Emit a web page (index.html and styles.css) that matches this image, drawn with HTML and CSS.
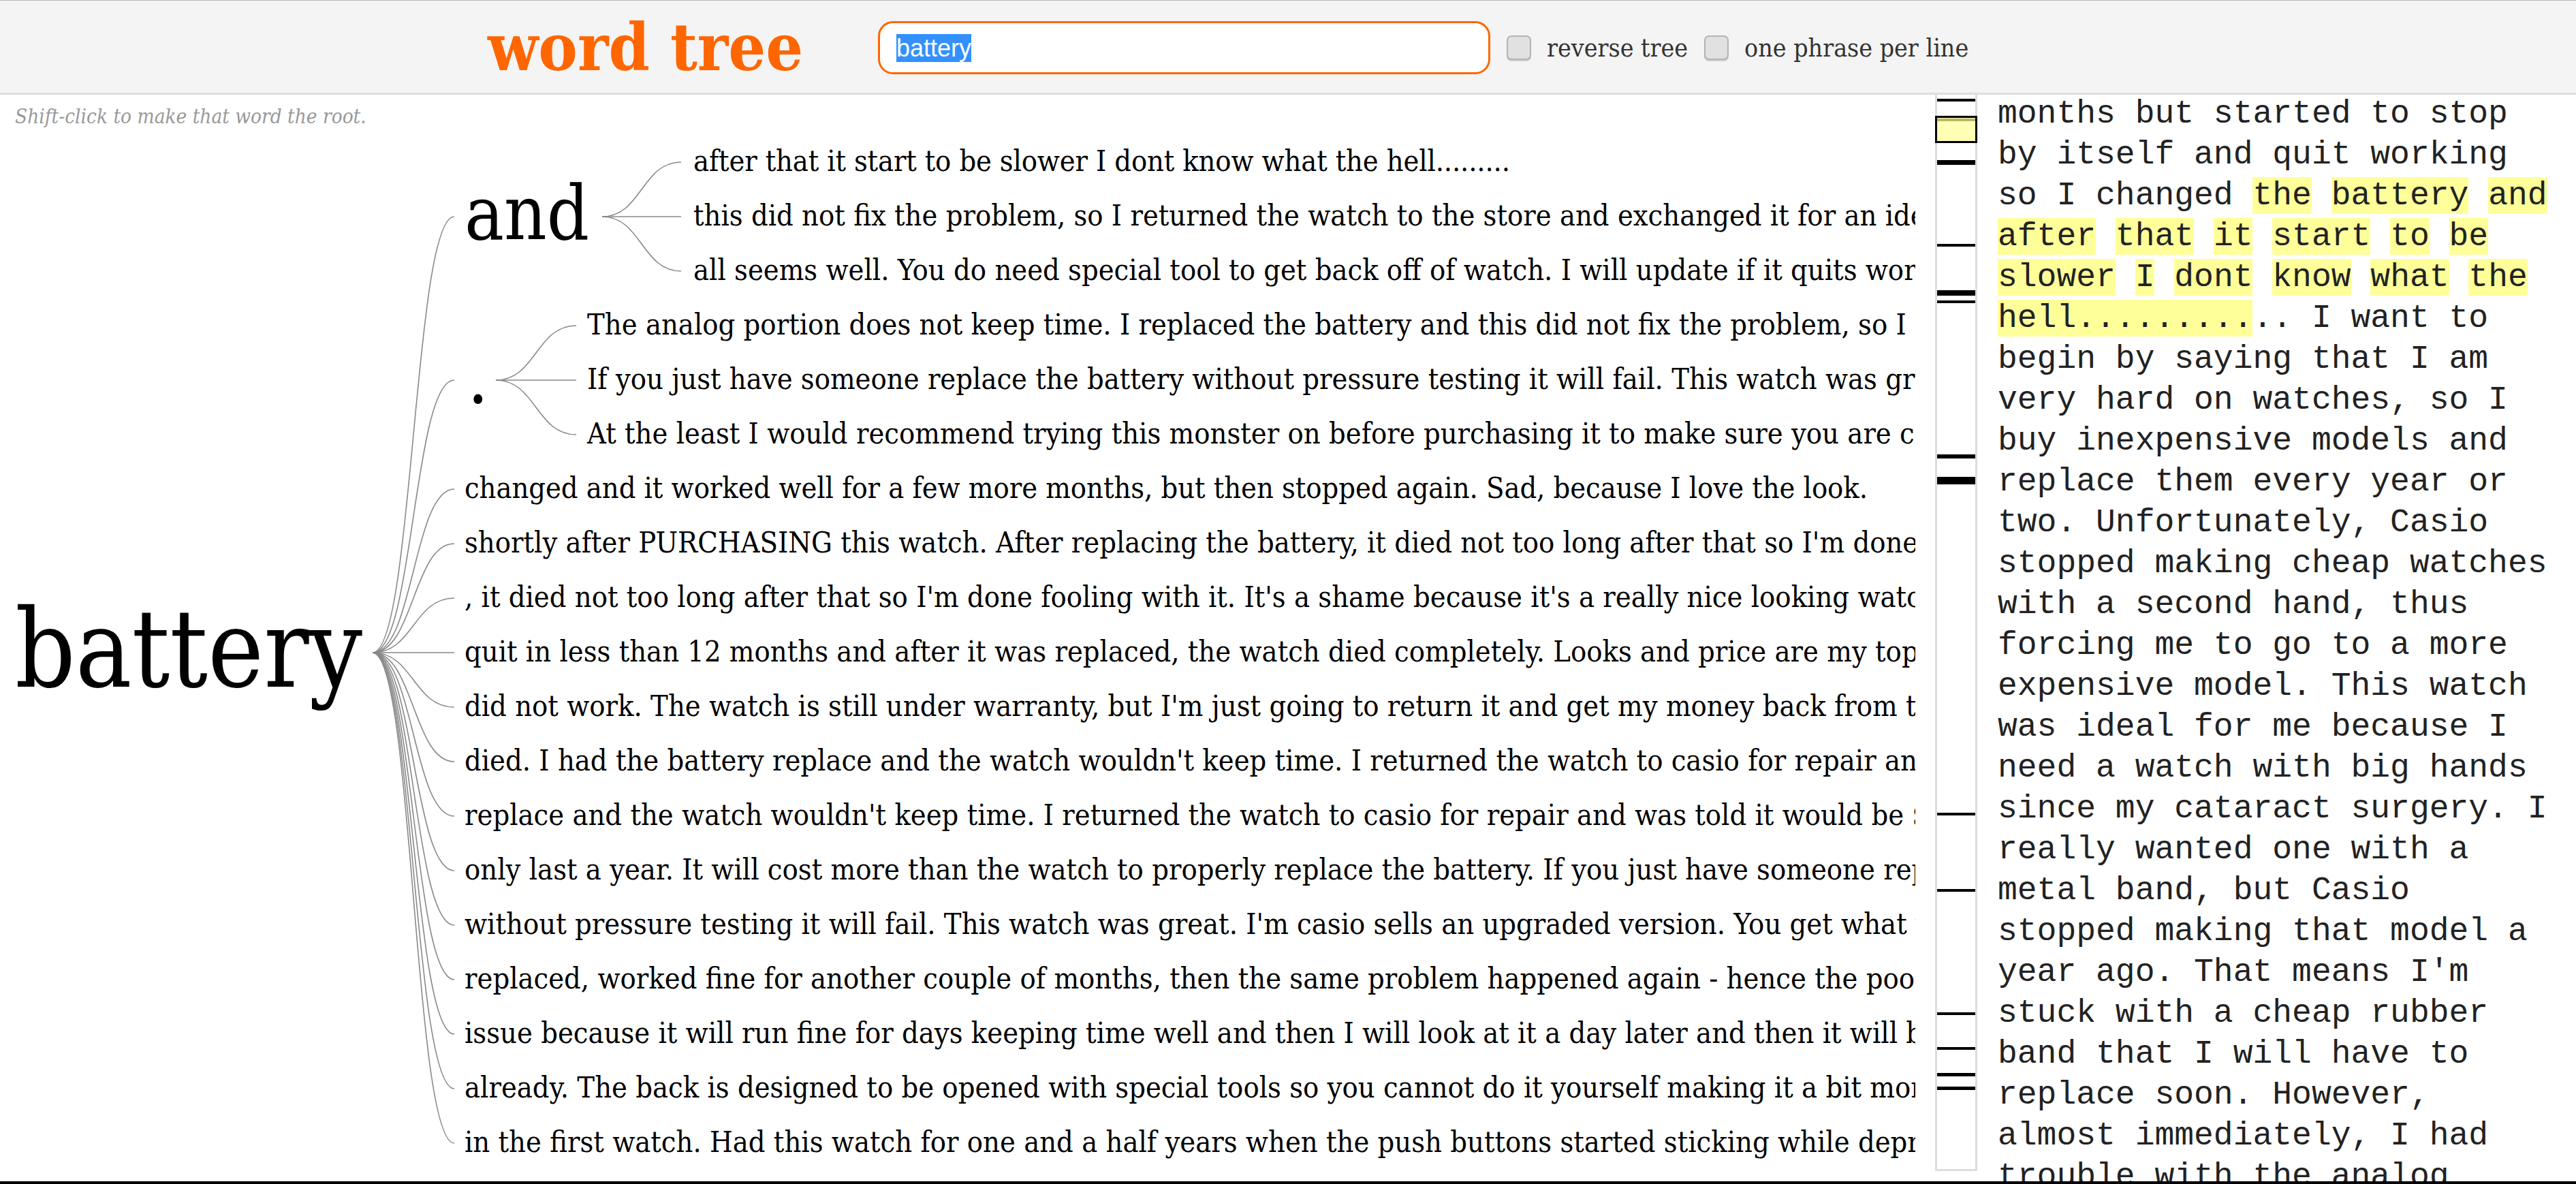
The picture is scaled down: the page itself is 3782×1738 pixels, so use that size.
FILE: index.html
```html
<!DOCTYPE html>
<html lang="en">
<head>
<meta charset="utf-8">
<title>word tree</title>
<link rel="stylesheet" href="styles.css">
</head>
<body>
<header class="topbar">
  <div class="brand">word tree</div>
  <div class="search"><span class="sel">battery</span></div>
  <label class="opt"><span class="box"></span><span class="opt-label">reverse tree</span></label>
  <label class="opt"><span class="box"></span><span class="opt-label">one phrase per line</span></label>
</header>
<main class="main">
  <section class="tree-col">
    <p class="hint">Shift-click to make that word the root.</p>
    <svg class="tree" width="2812" height="1538" viewBox="0 0 2812 1538" xmlns="http://www.w3.org/2000/svg">
      <g class="br">
        <path d="M547,758 C607,758 607,118 667,118"/>
        <path d="M547,758 C607,758 607,358 667,358"/>
        <path d="M547,758 C607,758 607,518 667,518"/>
        <path d="M547,758 C607,758 607,598 667,598"/>
        <path d="M547,758 C607,758 607,678 667,678"/>
        <path d="M547,758 C607,758 607,758 667,758"/>
        <path d="M547,758 C607,758 607,838 667,838"/>
        <path d="M547,758 C607,758 607,918 667,918"/>
        <path d="M547,758 C607,758 607,998 667,998"/>
        <path d="M547,758 C607,758 607,1078 667,1078"/>
        <path d="M547,758 C607,758 607,1158 667,1158"/>
        <path d="M547,758 C607,758 607,1238 667,1238"/>
        <path d="M547,758 C607,758 607,1318 667,1318"/>
        <path d="M547,758 C607,758 607,1398 667,1398"/>
        <path d="M547,758 C607,758 607,1478 667,1478"/>
        <path d="M884,118 C942,118 942,38 1000,38"/>
        <path d="M884,118 C942,118 942,118 1000,118"/>
        <path d="M884,118 C942,118 942,198 1000,198"/>
        <path d="M728,358 C787,358 787,278 846,278"/>
        <path d="M728,358 C787,358 787,358 846,358"/>
        <path d="M728,358 C787,358 787,438 846,438"/>
      </g>
      <text class="t-root" x="22" y="808" textLength="510" lengthAdjust="spacingAndGlyphs">battery</text>
      <text class="t-mid" x="682" y="151" textLength="183" lengthAdjust="spacingAndGlyphs">and</text>
      <text class="t-mid" x="686" y="391">.</text>

      <text class="tw" x="1018" y="51" textLength="1199">after that it start to be slower I dont know what the hell.........</text>
      <text class="tw" x="1018" y="131">this did not fix the problem, so I returned the watch to the store and exchanged it for an identical one. That one also stopped after a few weeks.</text>
      <text class="tw" x="1018" y="211">all seems well. You do need special tool to get back off of watch. I will update if it quits working again, but so far so good.</text>

      <text class="tw" x="862" y="291">The analog portion does not keep time. I replaced the battery and this did not fix the problem, so I returned the watch to the store.</text>
      <text class="tw" x="862" y="371">If you just have someone replace the battery without pressure testing it will fail. This watch was great until then.</text>
      <text class="tw" x="862" y="451">At the least I would recommend trying this monster on before purchasing it to make sure you are comfortable with the size.</text>

      <text class="tw" x="682" y="531" textLength="2060">changed and it worked well for a few more months, but then stopped again. Sad, because I love the look.</text>
      <text class="tw" x="682" y="611">shortly after PURCHASING this watch. After replacing the battery, it died not too long after that so I'm done fooling with it.</text>
      <text class="tw" x="682" y="691">, it died not too long after that so I'm done fooling with it. It's a shame because it's a really nice looking watch.</text>
      <text class="tw" x="682" y="771">quit in less than 12 months and after it was replaced, the watch died completely. Looks and price are my top reasons for buying.</text>
      <text class="tw" x="682" y="851">did not work. The watch is still under warranty, but I'm just going to return it and get my money back from the seller.</text>
      <text class="tw" x="682" y="931">died. I had the battery replace and the watch wouldn't keep time. I returned the watch to casio for repair and was told it would be $50.</text>
      <text class="tw" x="682" y="1011">replace and the watch wouldn't keep time. I returned the watch to casio for repair and was told it would be $50 to fix it.</text>
      <text class="tw" x="682" y="1091">only last a year. It will cost more than the watch to properly replace the battery. If you just have someone replace the battery.</text>
      <text class="tw" x="682" y="1171">without pressure testing it will fail. This watch was great. I'm casio sells an upgraded version. You get what you pay for.</text>
      <text class="tw" x="682" y="1251">replaced, worked fine for another couple of months, then the same problem happened again - hence the poor rating here.</text>
      <text class="tw" x="682" y="1331">issue because it will run fine for days keeping time well and then I will look at it a day later and then it will be way off.</text>
      <text class="tw" x="682" y="1411">already. The back is designed to be opened with special tools so you cannot do it yourself making it a bit more expensive.</text>
      <text class="tw" x="682" y="1491">in the first watch. Had this watch for one and a half years when the push buttons started sticking while depressing them.</text>
    </svg>
  </section>
  <aside class="minimap">
    <div class="mark" style="top:6px;height:4px"></div>
    <div class="mark" style="top:35px;height:4px"></div>
    <div class="mark" style="top:96px;height:7px"></div>
    <div class="mark" style="top:219px;height:4px"></div>
    <div class="mark" style="top:287px;height:8px"></div>
    <div class="mark" style="top:302px;height:4px"></div>
    <div class="mark" style="top:528px;height:6px"></div>
    <div class="mark" style="top:561px;height:11px"></div>
    <div class="mark" style="top:1054px;height:4px"></div>
    <div class="mark" style="top:1166px;height:4px"></div>
    <div class="mark" style="top:1347px;height:4px"></div>
    <div class="mark" style="top:1398px;height:4px"></div>
    <div class="mark" style="top:1436px;height:5px"></div>
    <div class="mark" style="top:1456px;height:5px"></div>
    <div class="viewport"></div>
  </aside>
  <article class="doc">
    <p>months but started to stop by itself and quit working so I changed <span class="hl">the</span> <span class="hl">battery</span> <span class="hl">and</span> <span class="hl">after</span> <span class="hl">that</span> <span class="hl">it</span> <span class="hl">start</span> <span class="hl">to</span> <span class="hl">be</span> <span class="hl">slower</span> <span class="hl">I</span> <span class="hl">dont</span> <span class="hl">know</span> <span class="hl">what</span> <span class="hl">the</span> <span class="hl">hell.........</span>.. I want to begin by saying that I am very hard on watches, so I buy inexpensive models and replace them every year or two. Unfortunately, Casio stopped making cheap watches with a second hand, thus forcing me to go to a more expensive model. This watch was ideal for me because I need a watch with big hands since my cataract surgery. I really wanted one with a metal band, but Casio stopped making that model a year ago. That means I'm stuck with a cheap rubber band that I will have to replace soon. However, almost immediately, I had trouble with the analog portion of the watch.</p>
  </article>
</main>
<div class="frame-bottom"></div>
</body>
</html>
```

FILE: styles.css
```css
* { box-sizing: border-box; }

html, body {
  margin: 0;
  padding: 0;
  background: #fff;
}

body {
  width: 3782px;
  height: 1738px;
  overflow: hidden;
  font-family: "DejaVu Serif", Georgia, serif;
  font-stretch: condensed;
}

.topbar {
  display: flex;
  align-items: center;
  height: 139px;
  padding: 3px 0 0 716px;
  background: #f4f4f4;
  border-top: 1px solid #b8b8b8;
  border-bottom: 3px solid #dddddd;
}

.brand {
  flex: none;
  width: 573px;
  font-weight: bold;
  font-size: 96px;
  line-height: 92px;
  color: #ff6600;
  white-space: nowrap;
}

.search {
  flex: none;
  display: flex;
  align-items: center;
  width: 899px;
  height: 78px;
  padding-left: 24px;
  background: #fff;
  border: 3px solid #ff6600;
  border-radius: 22px;
}

.sel {
  font-family: "Liberation Sans", Arial, sans-serif;
  font-stretch: normal;
  font-size: 36px;
  line-height: 41px;
  background: #3390ff;
  color: #fff;
}

.opt {
  display: flex;
  align-items: center;
  margin-left: 24px;
}

.box {
  width: 36px;
  height: 36px;
  background: #e1e1e1;
  border: 2px solid #b3b3b3;
  border-radius: 7px;
  box-shadow: 0 2px 0 #cfcfcf;
}

.opt-label {
  margin-left: 23px;
  font-size: 37.2px;
  color: #333;
  white-space: nowrap;
}

.main {
  display: flex;
  height: 1599px;
}

.tree-col {
  flex: none;
  width: 2812px;
  overflow: hidden;
}

.hint {
  height: 61px;
  margin: 0;
  padding: 15px 0 0 22px;
  font-size: 29.5px;
  line-height: 34px;
  font-style: italic;
  color: #999;
  white-space: nowrap;
}

.tree {
  display: block;
}

.br path {
  fill: none;
  stroke: #888;
  stroke-width: 1.6;
}

.tree text { fill: #000; }
.tw { font-size: 43px; }
.t-root { font-size: 160px; }
.t-mid { font-size: 110px; }

.minimap {
  flex: none;
  position: relative;
  width: 62px;
  height: 1580px;
  margin-left: 29px;
  border: 3px solid #dddddd;
  border-top: none;
}

.mark {
  position: absolute;
  left: 0;
  right: 0;
  background: #000;
}

.viewport {
  position: absolute;
  left: -3px;
  right: -3px;
  top: 31px;
  height: 40px;
  border: 3px solid #000;
  background: rgba(255, 255, 153, 0.72);
}

.doc {
  flex: none;
  width: 820px;
  height: 1599px;
  margin-left: 30px;
  overflow: hidden;
  font-family: "Liberation Mono", "Courier New", monospace;
  font-stretch: normal;
  font-size: 48px;
  line-height: 60px;
  color: #222;
}

.doc p { margin: -2px 0 0; }

.hl { background: #ffff99; }

.frame-bottom {
  position: fixed;
  left: 0;
  right: 0;
  bottom: 0;
  height: 4px;
  background: #000;
}
```
